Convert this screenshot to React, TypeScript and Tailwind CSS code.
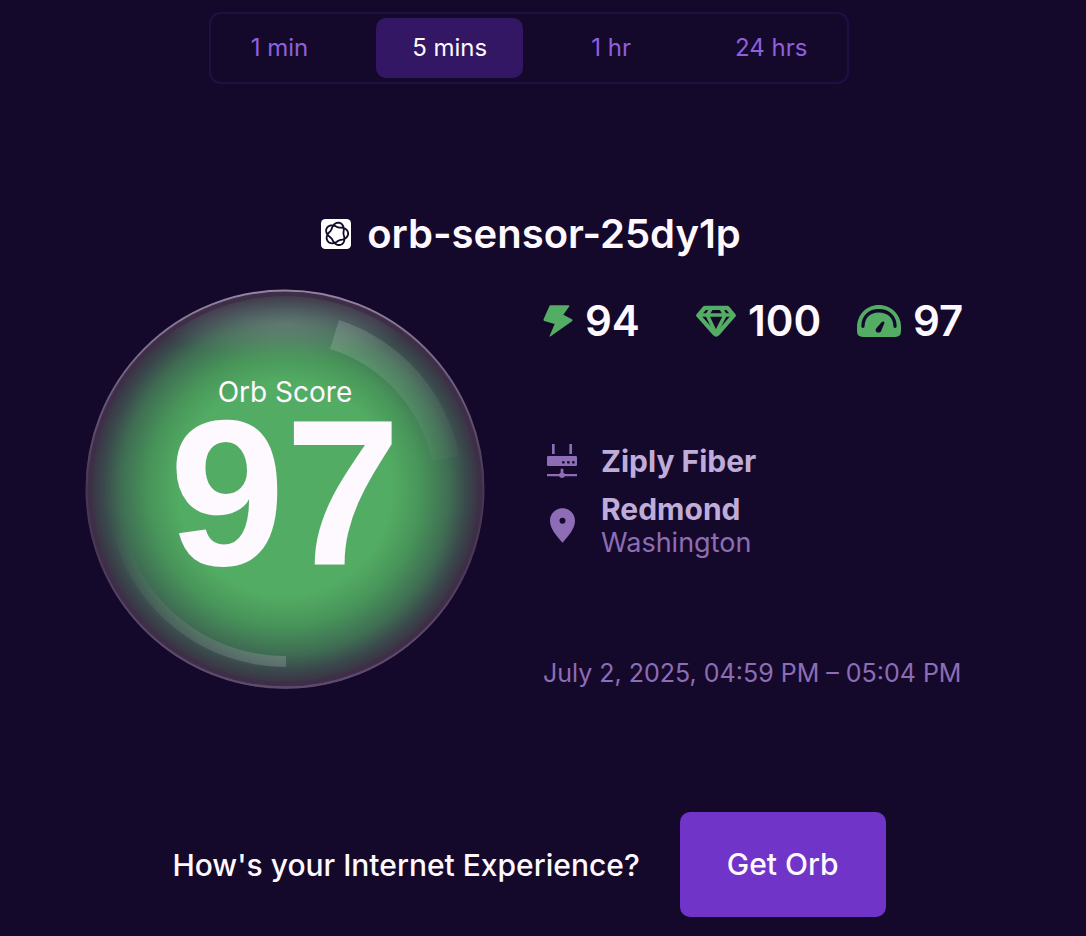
import React, { useState } from "react";

const periods = ["1 min", "5 mins", "1 hr", "24 hrs"];

// Five-lobed rosette that closes after two turns.
const rosette =
  "M" +
  Array.from({ length: 144 }, (_, i) => {
    const t = (i / 144) * Math.PI * 4;
    const r = 27.5 + 7 * Math.cos(2.5 * t);
    const a = t - 0.07;
    return `${(47 + r * Math.cos(a)).toFixed(2)} ${(45 + r * Math.sin(a)).toFixed(2)}`;
  }).join("L") +
  "Z";

function OrbMark() {
  return (
    <svg viewBox="0 0 90 90" className="size-[30px] shrink-0" aria-hidden="true">
      <rect width="90" height="90" rx="13" fill="#fff" />
      <path d={rosette} fill="none" stroke="#15092b" strokeWidth="5.5" strokeLinejoin="round" />
    </svg>
  );
}

function BoltIcon() {
  return (
    <svg viewBox="0 0 88 96" className="h-8 w-[30px] shrink-0" fill="#54ad64" aria-hidden="true">
      <path d="M22 1H76Q80 1 77 5L60 29L86 43Q89 46 86 49L22 94Q18 97 19 92L34 57L3 48Q-1 46 1 42L18 4Q19 1 22 1Z" />
    </svg>
  );
}

function GemIcon() {
  return (
    <svg viewBox="0 0 121 94" className="h-8 w-10 shrink-0" fill="none" stroke="#54ad64" strokeWidth="13" strokeLinejoin="round" aria-hidden="true">
      <path d="M27 7H95L114 30L66 85Q61 90 56 85L7 30Z" />
      <path d="M8 29H113M47 8L34 29L60 84L88 29L75 8" strokeWidth="11" />
    </svg>
  );
}

function GaugeIcon() {
  return (
    <svg viewBox="0 0 133 96" className="h-8 w-11 shrink-0" aria-hidden="true">
      <path d="M66 0C28 0 0 30 0 66V78Q0 96 18 96H115Q133 96 133 78V66C133 30 104 0 66 0Z" fill="#54ad64" />
      <path d="M18 64C18 34 39 17 66 17S115 34 115 64" fill="none" stroke="#15092b" strokeWidth="10" strokeLinecap="round" />
      <path d="M75 51L59 69C53 75 58 84 65 83C71 83 74 79 74 75L83 54Q83 47 75 51Z" fill="#15092b" />
    </svg>
  );
}

function RouterIcon() {
  return (
    <svg viewBox="0 0 90 102" className="h-[34px] w-[30px] shrink-0" fill="#8d6db5" aria-hidden="true">
      <path d="M15 0H23V30H15ZM67 0H75V30H67ZM4 36H86Q90 36 90 40V62Q90 66 86 66H4Q0 66 0 62V40Q0 36 4 36ZM41 74H49V86Q53 88 54 90H90V97H54Q51 102 45 102T36 97H0V90H36Q37 88 41 86Z" />
      <g fill="#15092b">
        <circle cx="49" cy="55" r="4" />
        <circle cx="64" cy="55" r="4" />
        <circle cx="79" cy="55" r="4" />
      </g>
    </svg>
  );
}

function PinIcon() {
  return (
    <svg viewBox="0 0 76 105" className="h-[35px] w-[25px] shrink-0" aria-hidden="true">
      <path d="M38 0C16 0 0 17 0 38C0 63 21 85 38 105C55 85 76 63 76 38C76 17 60 0 38 0Z" fill="#8d6db5" />
      <circle cx="38" cy="38" r="9" fill="#15092b" />
    </svg>
  );
}

function OrbSphere() {
  return (
    <svg viewBox="0 0 400 400" className="col-start-1 row-start-1 size-full" aria-hidden="true">
      <defs>
        <radialGradient id="glow" gradientUnits="userSpaceOnUse" cx="200" cy="200" r="194">
          <stop offset="0" stopColor="#53ac63" />
          <stop offset="0.55" stopColor="#53ac63" />
          <stop offset="0.7" stopColor="#48955a" />
          <stop offset="0.85" stopColor="#3f6d53" />
          <stop offset="0.94" stopColor="#3a474c" />
          <stop offset="1" stopColor="#3a3445" />
        </radialGradient>
        <linearGradient id="rim" x1="0" y1="0" x2="0" y2="1">
          <stop offset="0" stopColor="#9385a0" />
          <stop offset="0.28" stopColor="#66587a" />
          <stop offset="0.5" stopColor="#473650" />
          <stop offset="0.75" stopColor="#4c3b5c" />
          <stop offset="1" stopColor="#635174" />
        </linearGradient>
        <radialGradient id="sheen">
          <stop offset="0" stopColor="#8f8a9c" stopOpacity="0.4" />
          <stop offset="1" stopColor="#8f8a9c" stopOpacity="0" />
        </radialGradient>
        <clipPath id="inner">
          <circle cx="200" cy="200" r="193" />
        </clipPath>
        <linearGradient id="arcTop" gradientUnits="userSpaceOnUse" x1="250" y1="40" x2="365" y2="175">
          <stop offset="0" stopColor="#fff" stopOpacity="0.15" />
          <stop offset="1" stopColor="#fff" stopOpacity="0.02" />
        </linearGradient>
        <linearGradient id="arcLow" gradientUnits="userSpaceOnUse" x1="201" y1="370" x2="30" y2="240">
          <stop offset="0" stopColor="#c9bfd2" stopOpacity="0.25" />
          <stop offset="1" stopColor="#c9bfd2" stopOpacity="0" />
        </linearGradient>
      </defs>
      <circle cx="200" cy="200" r="199" fill="#3e2e48" />
      <circle cx="200" cy="200" r="193" fill="url(#glow)" />
      <ellipse cx="200" cy="36" rx="125" ry="36" fill="url(#sheen)" clipPath="url(#inner)" />
      <circle cx="200" cy="200" r="198.5" fill="none" stroke="url(#rim)" strokeWidth="2" />
      <path d="M17 277A199 199 0 0 0 383 277A197 195 0 0 1 17 277Z" fill="#5b4a6b" />
      <path d="M254 31A178 178 0 0 1 374 167L347 172A149 149 0 0 0 245 60Z" fill="url(#arcTop)" />
      <path d="M28 243A178 178 0 0 0 201 378V367A167 167 0 0 1 38 239Z" fill="url(#arcLow)" />
    </svg>
  );
}

function Metric({ icon, label, value }: { icon: React.ReactNode; label: string; value: number }) {
  return (
    <li className="flex items-center gap-3" aria-label={label}>
      {icon}
      <span>{value}</span>
    </li>
  );
}

export default function App() {
  const [period, setPeriod] = useState("5 mins");
  return (
    <main className="flex min-h-screen flex-col items-center bg-[#15092b] pt-3 pr-7 pb-4 font-['Inter',sans-serif] text-[#fef8ff]">
      <nav aria-label="Time range" className="flex gap-8 rounded-xl border-2 border-[#200f45] p-1">
        {periods.map((p) => (
          <button
            key={p}
            type="button"
            aria-pressed={p === period}
            onClick={() => setPeriod(p)}
            className={
              p === period
                ? "h-15 rounded-[10px] bg-[#331664] px-9 text-2xl text-[#fef8ff]"
                : "h-15 rounded-[10px] px-9 text-2xl text-[#8f60dc]"
            }
          >
            {p}
          </button>
        ))}
      </nav>

      <div className="mt-[126px] flex items-center gap-4 pl-1">
        <OrbMark />
        <h1 className="text-[40px] leading-12 font-semibold">orb-sensor-25dy1p</h1>
      </div>

      <section className="mt-[31px] flex gap-[58px]">
        <div className="grid size-[400px] shrink-0 place-items-center">
          <OrbSphere />
          <div className="relative col-start-1 row-start-1 flex flex-col items-center pb-6">
            <span className="text-[28px] leading-8">Orb Score</span>
            <span className="font-['Liberation_Sans',sans-serif] text-[208px] leading-[170px] font-bold">97</span>
          </div>
        </div>

        <div className="flex w-[430px] flex-col justify-between pt-2">
          <ul className="grid grid-cols-[153px_161px_auto] text-[42px] leading-12 font-semibold">
            <Metric icon={<BoltIcon />} label="Responsiveness" value={94} />
            <Metric icon={<GemIcon />} label="Reliability" value={100} />
            <Metric icon={<GaugeIcon />} label="Speed" value={97} />
          </ul>

          <div className="flex flex-col gap-3 pl-1">
            <div className="flex items-center gap-6">
              <RouterIcon />
              <p className="text-[30px] leading-9 font-bold text-[#c0acd8]">Ziply Fiber</p>
            </div>
            <div className="flex items-center gap-6">
              <span className="flex w-[30px] justify-center">
                <PinIcon />
              </span>
              <p className="text-[27px] leading-8 text-[#8d6db5]">
                <strong className="block text-[30px] leading-9 font-bold text-[#c0acd8]">Redmond</strong>
                Washington
              </p>
            </div>
          </div>

          <p className="text-[25px] leading-8 whitespace-nowrap text-[#8d6db5]">July 2, 2025, 04:59 PM – 05:04 PM</p>
        </div>
      </section>

      <footer className="mt-[123px] flex items-center gap-10">
        <p className="text-[30px] leading-10 font-medium">How's your Internet Experience?</p>
        <a href="#get-orb" className="rounded-[10px] bg-[#7134c8] px-[47px] py-8 text-[30px] leading-[41px] font-medium">
          Get Orb
        </a>
      </footer>
    </main>
  );
}
